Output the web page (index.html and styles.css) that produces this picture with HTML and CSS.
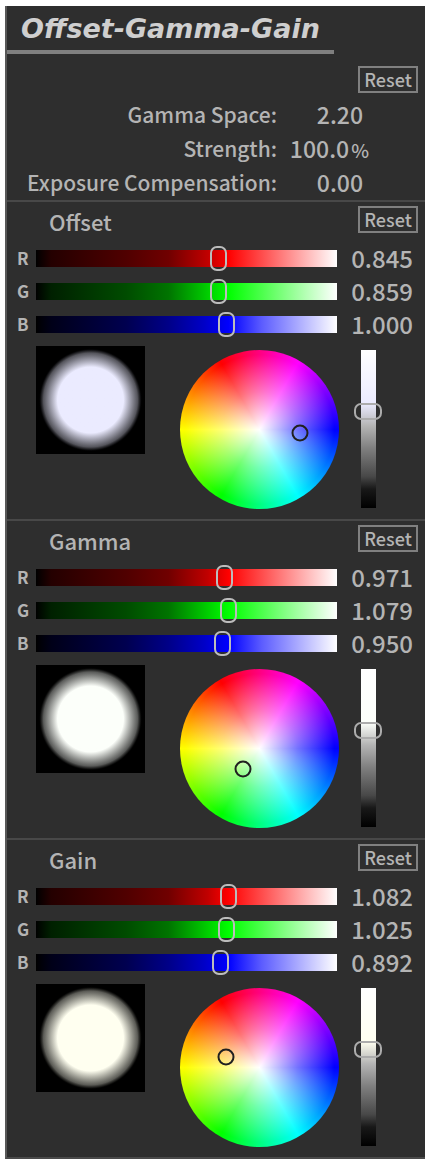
FILE: index.html
```
<!DOCTYPE html>
<html lang="en">
<head>
<meta charset="utf-8">
<meta name="viewport" content="width=device-width, initial-scale=1">
<title>Offset-Gamma-Gain</title>
<link rel="stylesheet" href="styles.css">
</head>
<body>
<main class="panel">
  <header class="intro">
    <h1 class="title">Offset-Gamma-Gain</h1>
    <div class="intro-tools"><button class="reset" type="button">Reset</button></div>
    <dl class="settings">
      <dt>Gamma Space:</dt><dd>2.20</dd>
      <dt>Strength:</dt><dd class="percent">100.0<span class="unit">%</span></dd>
      <dt>Exposure Compensation:</dt><dd>0.00</dd>
    </dl>
  </header>

  <section class="group offset">
    <div class="group-head"><h2>Offset</h2><button class="reset" type="button">Reset</button></div>
    <div class="channels">
      <label for="offset-r">R</label><input class="slider red" id="offset-r" type="range" max="1000" value="613"><output for="offset-r">0.845</output>
      <label for="offset-g">G</label><input class="slider green" id="offset-g" type="range" max="1000" value="613"><output for="offset-g">0.859</output>
      <label for="offset-b">B</label><input class="slider blue" id="offset-b" type="range" max="1000" value="641"><output for="offset-b">1.000</output>
    </div>
    <div class="pickers">
      <div class="swatch"></div>
      <div class="wheel"><span class="marker" style="left:75.5%;top:52.5%"></span></div>
      <input class="level" type="range" max="1000" value="625" aria-label="Offset level">
    </div>
  </section>

  <section class="group gamma">
    <div class="group-head"><h2>Gamma</h2><button class="reset" type="button">Reset</button></div>
    <div class="channels">
      <label for="gamma-r">R</label><input class="slider red" id="gamma-r" type="range" max="1000" value="635"><output for="gamma-r">0.971</output>
      <label for="gamma-g">G</label><input class="slider green" id="gamma-g" type="range" max="1000" value="648"><output for="gamma-g">1.079</output>
      <label for="gamma-b">B</label><input class="slider blue" id="gamma-b" type="range" max="1000" value="627"><output for="gamma-b">0.950</output>
    </div>
    <div class="pickers">
      <div class="swatch"></div>
      <div class="wheel"><span class="marker" style="left:40%;top:63%"></span></div>
      <input class="level" type="range" max="1000" value="625" aria-label="Gamma level">
    </div>
  </section>

  <section class="group gain">
    <div class="group-head"><h2>Gain</h2><button class="reset" type="button">Reset</button></div>
    <div class="channels">
      <label for="gain-r">R</label><input class="slider red" id="gain-r" type="range" max="1000" value="648"><output for="gain-r">1.082</output>
      <label for="gain-g">G</label><input class="slider green" id="gain-g" type="range" max="1000" value="641"><output for="gain-g">1.025</output>
      <label for="gain-b">B</label><input class="slider blue" id="gain-b" type="range" max="1000" value="620"><output for="gain-b">0.892</output>
    </div>
    <div class="pickers">
      <div class="swatch"></div>
      <div class="wheel"><span class="marker" style="left:29.4%;top:43.3%"></span></div>
      <input class="level" type="range" max="1000" value="625" aria-label="Gain level">
    </div>
  </section>
</main>
</body>
</html>
```
FILE: styles.css
```
* { box-sizing: border-box; }

body {
  margin: 0;
  padding: 6px 4px 6px 5px;
  background: #fff;
  color: #b4b4b4;
  font-family: "Noto Sans CJK SC", "Noto Sans", sans-serif;
  font-size: 21px;
  font-weight: 500;
}

h1, h2, dl, dd { margin: 0; }

.panel {
  background: #2e2e2e;
  border-left: 2px solid #585858;
  border-bottom: 2px solid #4a4a4a;
}

.title {
  width: fit-content;
  padding: 6px 14px 4px;
  border-bottom: 4px solid #808080;
  color: #cfcfcf;
  font-family: "DejaVu Sans", sans-serif;
  font-size: 27px;
  font-style: italic;
  font-weight: 700;
  line-height: 34px;
}

.intro { padding-bottom: 1px; }

.intro-tools {
  display: flex;
  justify-content: flex-end;
  padding: 12px 7px 4px 0;
}

.reset {
  width: 60px;
  height: 27px;
  padding: 0;
  border: 2px solid #808080;
  background: transparent;
  color: #b4b4b4;
  font-family: inherit;
  font-size: 18px;
  font-weight: 500;
  line-height: 21px;
}

.settings {
  display: grid;
  grid-template-columns: 1fr 92px;
  grid-auto-rows: 34px;
  line-height: 34px;
  padding-right: 56px;
  text-align: right;
}

.settings dt { white-space: nowrap; }
.settings dd { padding-right: 6px; font-size: 23px; }
.settings .percent { padding-right: 0; }
.unit { padding-left: 2px; font-size: 19px; }

.group {
  padding-bottom: 10px;
  border-top: 2px solid #484848;
}

.group-head {
  display: flex;
  justify-content: space-between;
  align-items: flex-start;
  padding: 4px 7px 0 42px;
}

.group-head h2 {
  padding-bottom: 4px;
  font-size: 22px;
  font-weight: 500;
  line-height: 31px;
}

.channels {
  display: grid;
  grid-template-columns: 21px 1fr 76px;
  grid-auto-rows: 33px;
  align-items: center;
  padding: 1px 12px 0 8px;
}

.channels label {
  padding-left: 2px;
  padding-bottom: 2px;
  font-size: 17px;
  font-weight: 700;
  line-height: 24px;
}

.channels output {
  padding-bottom: 2px;
  font-size: 24px;
  line-height: 30px;
  text-align: right;
}

.slider, .level {
  appearance: none;
  margin: 0;
  background-color: transparent;
  background-position: center;
  background-repeat: no-repeat;
}

.slider {
  width: 100%;
  height: 25px;
  background-size: 100% 17px;
}

.slider::-webkit-slider-thumb {
  appearance: none;
  width: 17px;
  height: 25px;
  border: 2px solid #bcbcbc;
  border-radius: 7px;
  background: transparent;
}

.red { background-image: linear-gradient(90deg, #000, #240000 5%, #500000 30%, #700000 44%, #c00000 57%, #f00 64%, #ff4c4c 75%, #fff); }
.green { background-image: linear-gradient(90deg, #000, #002000 5%, #004c00 30%, #007400 44%, #00c000 55%, #0f0 64%, #4cff4c 75%, #fff); }
.blue { background-image: linear-gradient(90deg, #000, #000018 5%, #000050 30%, #000088 44%, #0000c8 56%, #00f 64%, #5c5cff 75%, #fff); }

.pickers {
  display: flex;
  justify-content: space-between;
  align-items: flex-start;
  padding: 5px 43px 0 29px;
}

.swatch {
  width: 109px;
  height: 108px;
  background: radial-gradient(circle closest-side,
    var(--tint) 61%,
    color-mix(in srgb, var(--tint) 62%, #000) 76%,
    color-mix(in srgb, var(--tint) 36%, #000) 87%,
    #000 96%);
}

.offset { --tint: #ebebff; }
.gamma { --tint: #fcfffa; }
.gain { --tint: #fffff0; }

.wheel {
  position: relative;
  width: 159px;
  height: 159px;
  margin-top: 4px;
  margin-left: 19px;
  border-radius: 50%;
  background:
    radial-gradient(closest-side, #fff, rgba(255, 255, 255, 0.45) 48%, transparent 94%),
    conic-gradient(from 90deg, #00f, #0ff, #0f0, #ff0, #f00, #f0f, #00f);
}

.marker {
  position: absolute;
  width: 17px;
  height: 17px;
  border: 2px solid #202020;
  border-radius: 50%;
  translate: -50% -50%;
}

.level {
  writing-mode: vertical-lr;
  direction: rtl;
  width: 28px;
  height: 158px;
  margin-top: 4px;
  background-image: linear-gradient(#fff, var(--tint) 34%, #b4b4b4 48%, #808080 62%, #484848 80%, #181818 88%, #000);
  background-size: 15px 100%;
}

.level::-webkit-slider-thumb {
  appearance: none;
  width: 28px;
  height: 17px;
  border: 2px solid #acacac;
  border-radius: 7px;
  background: transparent;
}
```
